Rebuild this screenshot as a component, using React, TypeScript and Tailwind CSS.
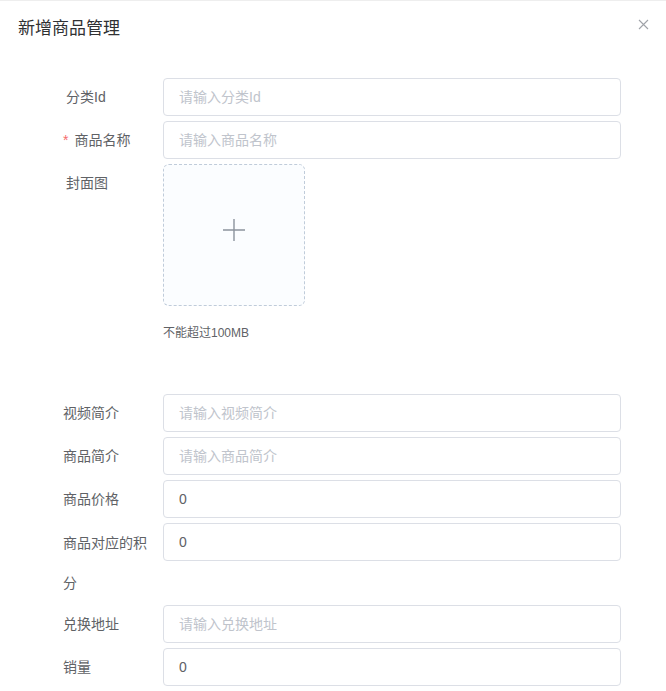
import React from "react";

const font = { fontFamily: '"Liberation Sans", "Noto Sans CJK SC", sans-serif' };

type Row = { label: string; placeholder?: string; value?: string; required?: boolean; indent?: boolean };

const FormRow = ({ label, placeholder, value, required, indent }: Row) => {
  return (
    <div className="flex items-start mb-[5px]">
      <label
        className={
          indent
            ? "w-[100px] shrink-0 pl-[3px] pr-3 text-[14px] leading-[38px] text-[#606266]"
            : "w-[100px] shrink-0 pr-3 text-[14px] leading-[38px] text-[#606266]"
        }
      >
        {required && <span className="text-[#f56c6c] mr-[6px]">*</span>}
        {label}
      </label>
      <input
        type="text"
        readOnly
        className="w-[458px] h-[38px] px-[15px] border border-[#dcdfe6] rounded text-[14px] text-[#606266] placeholder:text-[#c0c4cc] outline-none bg-white"
        placeholder={placeholder}
        value={value}
        style={font}
      />
    </div>
  );
};

const App = () => {
  return (
    <div className="w-[666px] h-[691px] bg-white overflow-hidden border-t border-[#eeeeee]" style={font}>
      <div className="flex items-start justify-between pl-[18px] pr-[17px] pt-[17px]">
        <h1 className="text-[17px] leading-[22px] text-[#303133]">新增商品管理</h1>
        <svg width="11" height="11" viewBox="0 0 11 11" className="mt-[1px]">
          <path d="M1 1L10 10M10 1L1 10" stroke="#a0a3a9" strokeWidth="1.1" />
        </svg>
      </div>

      <div className="pl-[63px] pt-[38px]">
        <FormRow label="分类Id" placeholder="请输入分类Id" indent />
        <FormRow label="商品名称" placeholder="请输入商品名称" required />

        <div className="flex items-start mt-[1px]">
          <label className="w-[100px] shrink-0 pl-[3px] pr-3 text-[14px] leading-[38px] text-[#606266]">
            封面图
          </label>
          <div className="flex flex-col">
            <div className="w-[142px] h-[142px] border border-dashed border-[#c0ccda] rounded-md bg-[#fbfdff] flex items-center justify-center">
              <svg width="22" height="22" viewBox="0 0 22 22" className="mb-[10px]">
                <path d="M11 0V22M0 11H22" stroke="#8c939d" strokeWidth="1.4" />
              </svg>
            </div>
            <p className="text-[12px] leading-[20px] text-[#606266] mt-[17px]">不能超过100MB</p>
          </div>
        </div>

        <div className="mt-[51px]">
          <FormRow label="视频简介" placeholder="请输入视频简介" />
          <FormRow label="商品简介" placeholder="请输入商品简介" />
          <FormRow label="商品价格" value="0" />
          <div className="flex items-start mb-[2px]">
            <label className="w-[100px] shrink-0 pr-3 text-[14px] leading-[40px] text-[#606266] break-all">
              商品对应的积分
            </label>
            <input
              type="text"
              readOnly
              value="0"
              className="w-[458px] h-[38px] px-[15px] border border-[#dcdfe6] rounded text-[14px] text-[#606266] outline-none bg-white"
              style={font}
            />
          </div>
          <FormRow label="兑换地址" placeholder="请输入兑换地址" />
          <FormRow label="销量" value="0" />
        </div>
      </div>
    </div>
  );
};

export default App;
